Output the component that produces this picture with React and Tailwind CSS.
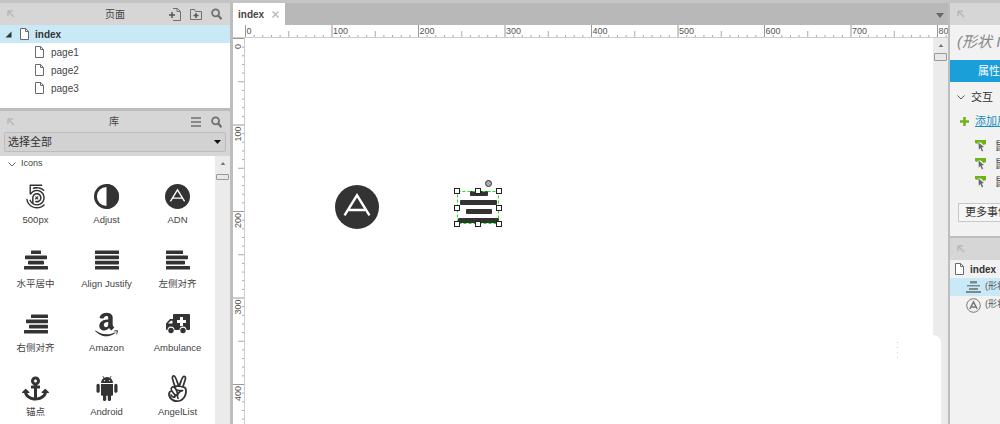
import { Fa500Px, FaAmazon, FaAnchor, FaAngellist } from "react-icons/fa";

const font = "font-['Liberation_Sans','Noto_Sans_CJK_SC',sans-serif]";

function PageIcon({ className = "" }) {
    return (
        <svg width="9" height="12" viewBox="0 0 9 12" className={`shrink-0 ${className}`}>
            <path d="M.5.500h5.200l2.800 3v8h-8z" fill="#fff" stroke="#6b6b6b" />
            <path d="M5.500.500v3h3" fill="none" stroke="#6b6b6b" />
        </svg>
    );
}

function CornerArrow() {
    return (
        <svg width="8" height="8" viewBox="0 0 8 8" className="shrink-0">
            <path d="M1 1h5M1 1v5M1 1l6 6" fill="none" stroke="#b9b9b9" strokeWidth="1.6" />
        </svg>
    );
}

function SearchIcon() {
    return (
        <svg width="11" height="12" viewBox="0 0 11 12" className="shrink-0">
            <circle cx="4.600" cy="4.800" r="3.500" fill="none" stroke="#707070" strokeWidth="1.8" />
            <path d="M7.200 7.600l3.300 3.600" stroke="#707070" strokeWidth="2.2" />
        </svg>
    );
}

function Bars({ rows }) {
    return (
        <svg width="26" height="20" viewBox="0 0 26 20">
            {rows.map(([x, w], i) => (
                <rect key={i} x={x} y={i * 5.2 + 0.4} width={w} height="3.6" rx="0.6" fill="#333" />
            ))}
        </svg>
    );
}

function AdnMark({ size = 24 }) {
    return (
        <svg width={size} height={size} viewBox="0 0 24 24">
            <circle cx="12" cy="12" r="12" fill="#333" />
            <path d="M5.200 16.600L12 5.600l6.800 11M7.600 13.600h8.800" fill="none" stroke="#fff" strokeWidth="1.3" />
        </svg>
    );
}

function AdjustIcon() {
    return (
        <svg width="25" height="25" viewBox="0 0 24 24">
            <circle cx="12" cy="12" r="10.600" fill="#fff" stroke="#333" strokeWidth="2.8" />
            <path d="M12 0a12 12 0 0 1 0 24z" fill="#333" />
        </svg>
    );
}

function AmbulanceIcon() {
    return (
        <svg width="24" height="20" viewBox="0 0 24 20">
            <path d="M8 0h15a1 1 0 0 1 1 1v14a1 1 0 0 1-1 1h-2.500a3.500 3.500 0 0 0-7 0H8.500a3.500 3.500 0 0 0-7 0H1a1 1 0 0 1-1-1V9.500L4 5h3V1a1 1 0 0 1 1-1z" fill="#333" />
            <path d="M14 3h3v3h3v3h-3v3h-3V9h-3V6h3z" fill="#fff" />
            <path d="M2 9.500L4.800 6.800H6.500v2.700z" fill="#fff" />
            <circle cx="5" cy="16.500" r="2.700" fill="#333" />
            <circle cx="17" cy="16.500" r="2.700" fill="#333" />
        </svg>
    );
}

function AndroidIcon() {
    return (
        <svg width="22" height="26" viewBox="0 0 22 26">
            <path d="M5 8a6 6 0 0 1 12 0z" fill="#333" />
            <path d="M6.800 1l1.600 3M15.200 1l-1.600 3" stroke="#333" strokeWidth="0.8" />
            <circle cx="8.500" cy="5.600" r="0.700" fill="#fff" />
            <circle cx="13.500" cy="5.600" r="0.700" fill="#fff" />
            <path d="M5 9h12v10.500a1.200 1.200 0 0 1-1.200 1.200H6.200A1.200 1.200 0 0 1 5 19.500z" fill="#333" />
            <rect x="0.500" y="8.800" width="3.200" height="9" rx="1.600" fill="#333" />
            <rect x="18.300" y="8.800" width="3.200" height="9" rx="1.600" fill="#333" />
            <rect x="7" y="19" width="3.200" height="7" rx="1.600" fill="#333" />
            <rect x="11.800" y="19" width="3.200" height="7" rx="1.600" fill="#333" />
        </svg>
    );
}

const library = [
    { name: "500px", icon: <Fa500Px size={25} color="#333" /> },
    { name: "Adjust", icon: <AdjustIcon /> },
    { name: "ADN", icon: <AdnMark size={25} /> },
    { name: "水平居中", icon: <Bars rows={[[8, 10], [2, 22], [5, 16], [1, 24]]} /> },
    { name: "Align Justify", icon: <Bars rows={[[1, 24], [1, 24], [1, 24], [1, 24]]} /> },
    { name: "左侧对齐", icon: <Bars rows={[[1, 17], [1, 22], [1, 19], [1, 24]]} /> },
    { name: "右侧对齐", icon: <Bars rows={[[8, 17], [3, 22], [6, 19], [1, 24]]} /> },
    { name: "Amazon", icon: <FaAmazon size={27} color="#333" /> },
    { name: "Ambulance", icon: <AmbulanceIcon /> },
    { name: "锚点", icon: <FaAnchor size={27} color="#333" /> },
    { name: "Android", icon: <AndroidIcon /> },
    { name: "AngelList", icon: <FaAngellist size={27} color="#333" /> },
];

function HRuler() {
    const ticks = [];
    for (let i = 0; i <= 81; i++) {
        const x = 12.5 + i * 8.65;
        const major = i % 10 === 0;
        const mid = i % 5 === 0;
        ticks.push(<line key={i} x1={x} x2={x} y1={major ? 0 : mid ? 6 : 10} y2="13" stroke={major ? "#999" : "#aaa"} />);
        if (major) {
            ticks.push(<text key={"t" + i} x={x + 1} y="9" fontSize="9" fill="#555">{i * 10}</text>);
        }
    }
    return (
        <svg width="715" height="13" viewBox="0 0 715 13" className="block">
            {ticks}
        </svg>
    );
}

function VRuler() {
    const ticks = [];
    for (let i = 0; i <= 45; i++) {
        const y = i * 8.65;
        const major = i % 10 === 0;
        const mid = i % 5 === 0;
        ticks.push(<line key={i} y1={y + 0.5} y2={y + 0.5} x1={major ? 0 : mid ? 5 : 9} x2="12" stroke={major ? "#999" : "#aaa"} />);
        if (major) {
            ticks.push(
                <text key={"t" + i} transform={`translate(8 ${y + 11 + (i > 0 ? 6 : 0)}) rotate(-90)`} fontSize="9" fill="#555">{i * 10}</text>
            );
        }
    }
    return (
        <svg width="12" height="386" viewBox="0 0 12 386" className="block">
            {ticks}
        </svg>
    );
}

function Handle({ className }) {
    return <div className={`absolute w-[6px] h-[6px] bg-white border border-[#222] ${className}`} />;
}

function ScrollUp() {
    return (
        <svg width="6" height="5" viewBox="0 0 6 5" className="mt-[5px] shrink-0">
            <path d="M3 1l2.400 3H.6z" fill="#777" />
        </svg>
    );
}

function EventRow() {
    return (
        <div className="h-[18px] flex items-center pl-[25px] gap-[9px]">
            <svg width="11" height="13" viewBox="0 0 11 13" className="shrink-0">
                <path d="M0 0h11v4L8.500 5 6 2.500H3.500L2 4 0 3z" fill="#6fb31a" />
                <path d="M3.500 2.500l5.500 4.500-2.300.4 1.500 3.300-1.300.7-1.500-3.300L3.800 9.800z" fill="#6a6a6a" />
            </svg>
            <span className="text-[11px] text-[#444]">鼠标单击时</span>
        </div>
    );
}

export default function App() {
    return (
        <div className={`${font} w-[1000px] h-[424px] overflow-hidden bg-[#c4c4c4] pt-[3px] flex text-[#333]`}>
            <aside className="w-[230px] shrink-0 flex flex-col">
                <div className="h-[22px] bg-[#d6d6d6] flex items-center pl-[7px] pr-[8px]">
                    <CornerArrow />
                    <span className="ml-[90px] text-[10px] text-[#444]">页面</span>
                    <div className="ml-auto flex items-center gap-[9px]">
                        <svg width="12" height="13" viewBox="0 0 12 13">
                            <path d="M4 .5h4.500L11.500 3.500v9H4M8 .5v3h3.500" fill="none" stroke="#707070" />
                            <path d="M0 7h6M3 4v6" stroke="#555" strokeWidth="1.500" />
                        </svg>
                        <svg width="12" height="11" viewBox="0 0 12 11">
                            <path d="M.5 10.500v-10h4l1 2h6v8z" fill="none" stroke="#707070" />
                            <path d="M3.500 6.500h5M6 4v5" stroke="#555" strokeWidth="1.500" />
                        </svg>
                        <SearchIcon />
                    </div>
                </div>
                <div className="h-[83px] bg-white">
                    <div className="h-[18px] bg-[#c9e9f7] flex items-center pl-[5px]">
                        <svg width="7" height="7" viewBox="0 0 7 7">
                            <path d="M6.500.5v6h-6z" fill="#333" />
                        </svg>
                        <PageIcon className="ml-[8px]" />
                        <span className="ml-[6px] text-[10px] font-bold text-[#333]">index</span>
                    </div>
                    {["page1", "page2", "page3"].map((p) => (
                        <div key={p} className="h-[18px] flex items-center pl-[35px]">
                            <PageIcon />
                            <span className="ml-[7px] text-[10px] text-[#444]">{p}</span>
                        </div>
                    ))}
                </div>
                <div className="h-[3px] bg-[#bdbdbd]" />
                <div className="h-[45px] bg-[#d6d6d6] px-[4px]">
                    <div className="h-[21px] flex items-center pl-[3px] pr-[4px]">
                        <CornerArrow />
                        <span className="ml-[94px] text-[10px] text-[#444]">库</span>
                        <div className="ml-auto flex items-center gap-[10px]">
                            <svg width="10" height="10" viewBox="0 0 10 10">
                                <path d="M0 1h10M0 5h10M0 9h10" stroke="#707070" strokeWidth="1.600" />
                            </svg>
                            <SearchIcon />
                        </div>
                    </div>
                    <div className="h-[20px] border border-[#bcbcbc] bg-[#d2d2d2] rounded-[2px] flex items-center justify-between pl-[3px] pr-[4px]">
                        <span className="text-[11px] text-[#333]">选择全部</span>
                        <svg width="7" height="4" viewBox="0 0 7 4">
                            <path d="M0 0h7L3.500 4z" fill="#111" />
                        </svg>
                    </div>
                </div>
                <div className="flex-1 flex min-h-0">
                    <div className="flex-1 bg-white min-w-0">
                        <div className="h-[13px] flex items-center pt-[3px] pl-[8px] gap-[5px]">
                            <svg width="8" height="5" viewBox="0 0 8 5">
                                <path d="M.5.500L4 4l3.500-3.500" fill="none" stroke="#666" />
                            </svg>
                            <span className="text-[9px] text-[#444]">Icons</span>
                        </div>
                        <div className="grid grid-cols-[71px_71px_71px] auto-rows-[64px]">
                            {library.map((item) => (
                                <div key={item.name} className="flex flex-col items-center pt-[12px]">
                                    <div className="h-[30px] flex items-center justify-center">{item.icon}</div>
                                    <span className="mt-[2px] text-[9.5px] leading-[14px] text-[#444] whitespace-nowrap">{item.name}</span>
                                </div>
                            ))}
                        </div>
                    </div>
                    <div className="w-[15px] shrink-0 bg-[#ebebeb] flex flex-col items-center">
                        <ScrollUp />
                        <div className="mt-[8px] w-[13px] h-[6px] bg-[#e8e8e8] border border-[#999] rounded-[1px]" />
                    </div>
                </div>
            </aside>

            <div className="w-[3px] shrink-0 bg-[#bdbdbd]" />

            <main className="w-[715px] shrink-0 flex flex-col">
                <div className="h-[22px] bg-[#b8b8b8] flex items-end justify-between pr-[4px]">
                    <div className="h-[22px] w-[52px] bg-white flex items-center pl-[5px] gap-[8px]">
                        <span className="text-[10px] font-bold text-[#444]">index</span>
                        <svg width="7" height="7" viewBox="0 0 7 7">
                            <path d="M.5.500l6 6M6.500.500l-6 6" stroke="#bbb" strokeWidth="1.500" />
                        </svg>
                    </div>
                    <svg width="8" height="5" viewBox="0 0 8 5" className="mb-[7px]">
                        <path d="M0 0h8L4 5z" fill="#666" />
                    </svg>
                </div>
                <div className="h-[13px] bg-white border-b border-[#ccc] overflow-hidden">
                    <HRuler />
                </div>
                <div className="flex-1 flex min-h-0">
                    <div className="w-[12px] shrink-0 border-r border-[#ccc] overflow-hidden bg-white">
                        <VRuler />
                    </div>
                    <div className="flex-1 bg-white relative min-w-0">
                        <div className="absolute left-[90px] top-[147px]">
                            <AdnMark size={44} />
                        </div>
                        <div className="absolute left-[212px] top-[153px] w-[42px] h-[33px]">
                            <div className="absolute left-[13px] top-0 w-[18px] h-[5px] rounded-[1px] bg-[#333]" />
                            <div className="absolute left-[3px] top-[9px] w-[37px] h-[5px] rounded-[1px] bg-[#333]" />
                            <div className="absolute left-[9px] top-[18px] w-[26px] h-[5px] rounded-[1px] bg-[#333]" />
                            <div className="absolute left-[1px] top-[27px] w-[41px] h-[5px] rounded-[1px] bg-[#333]" />
                            <svg width="42" height="33" viewBox="0 0 42 33" className="absolute inset-0">
                                <rect x="0.500" y="0.500" width="41" height="32" fill="none" stroke="#19e619" strokeDasharray="3 2" />
                            </svg>
                            <Handle className="left-[-3px] top-[-3px]" />
                            <Handle className="left-[18px] top-[-3px]" />
                            <Handle className="right-[-3px] top-[-3px]" />
                            <Handle className="left-[-3px] top-[14px]" />
                            <Handle className="right-[-3px] top-[14px]" />
                            <Handle className="left-[-3px] bottom-[-3px]" />
                            <Handle className="left-[18px] bottom-[-3px]" />
                            <Handle className="right-[-3px] bottom-[-3px]" />
                            <div className="absolute right-[7px] top-[-11px] w-[7px] h-[7px] rounded-full bg-[#aaa] border border-[#333]" />
                        </div>
                        <div className="absolute left-[652px] top-[304px] flex flex-col gap-[4px]">
                            <div className="w-px h-px bg-[#ccc]" />
                            <div className="w-px h-px bg-[#ccc]" />
                            <div className="w-px h-px bg-[#ccc]" />
                            <div className="w-px h-px bg-[#ddd]" />
                        </div>
                    </div>
                    <div className="w-[15px] shrink-0 bg-[#ebebeb] flex flex-col">
                        <div className="flex flex-col items-center">
                            <ScrollUp />
                            <div className="mt-[5px] w-[13px] h-[8px] bg-[#e8e8e8] border border-[#999] rounded-[1px]" />
                        </div>
                        <div className="mt-auto w-[8px] h-[89px] bg-white rounded-tr-[8px]" />
                    </div>
                </div>
            </main>

            <div className="w-[2px] shrink-0 bg-[#bdbdbd]" />

            <aside className="flex-1 min-w-0 flex flex-col bg-[#f2f2f2] overflow-hidden whitespace-nowrap">
                <div className="h-[22px] bg-[#d6d6d6] flex items-center pl-[7px] shrink-0">
                    <CornerArrow />
                </div>
                <div className="h-[35px] flex items-center pl-[7px] shrink-0">
                    <span className="text-[15px] italic text-[#888]">(形状 I</span>
                </div>
                <div className="h-[22px] bg-[#1a9fd9] flex items-center pl-[28px] shrink-0">
                    <span className="text-[11px] text-white">属性</span>
                </div>
                <div className="h-[31px] flex items-center pl-[7px] gap-[6px] shrink-0">
                    <svg width="8" height="5" viewBox="0 0 8 5" className="shrink-0">
                        <path d="M.5.500L4 4l3.500-3.500" fill="none" stroke="#555" />
                    </svg>
                    <span className="text-[11px] text-[#333]">交互</span>
                </div>
                <div className="h-[14px] mt-px flex items-center pl-[10px] gap-[6px] shrink-0">
                    <svg width="9" height="9" viewBox="0 0 9 9" className="shrink-0">
                        <path d="M4.500 0v9M0 4.500h9" stroke="#6fb31a" strokeWidth="2.500" />
                    </svg>
                    <span className="text-[11px] text-[#1a8fc4] underline">添加用例</span>
                </div>
                <div className="pt-[9px] shrink-0">
                    <EventRow />
                    <EventRow />
                    <EventRow />
                </div>
                <div className="mt-[12px] ml-[8px] w-[60px] h-[19px] border border-[#c8c8c8] bg-[#f6f6f6] flex items-center pl-[6px] shrink-0">
                    <span className="text-[11px] text-[#333]">更多事件</span>
                </div>
                <div className="mt-[14px] h-[2px] bg-[#bdbdbd] shrink-0" />
                <div className="h-[22px] bg-[#d6d6d6] flex items-center pl-[7px] shrink-0">
                    <CornerArrow />
                </div>
                <div className="h-[18px] flex items-center pl-[5px] gap-[6px] shrink-0">
                    <PageIcon />
                    <span className="text-[10px] font-bold text-[#333]">index</span>
                </div>
                <div className="h-[18px] bg-[#c9e9f7] flex items-center pl-[16px] gap-[4px] shrink-0">
                    <svg width="15" height="12" viewBox="0 0 15 12" className="shrink-0">
                        <path d="M4 0h7v2.500H4zM1 4h13v1.500H1zM3 7h9v2H3zM0 10h15v2H0z" fill="#7a8a90" />
                    </svg>
                    <span className="text-[9px] text-[#555]">(形状)</span>
                </div>
                <div className="h-[18px] flex items-center pl-[16px] gap-[4px] shrink-0">
                    <svg width="15" height="15" viewBox="0 0 15 15" className="shrink-0">
                        <circle cx="7.500" cy="7.500" r="6.800" fill="none" stroke="#777" />
                        <path d="M3.800 11L7.500 3.800 11.200 11M5.500 9h4" fill="none" stroke="#777" strokeWidth="1.500" />
                    </svg>
                    <span className="text-[9px] text-[#555]">(形状)</span>
                </div>
            </aside>
        </div>
    );
}
